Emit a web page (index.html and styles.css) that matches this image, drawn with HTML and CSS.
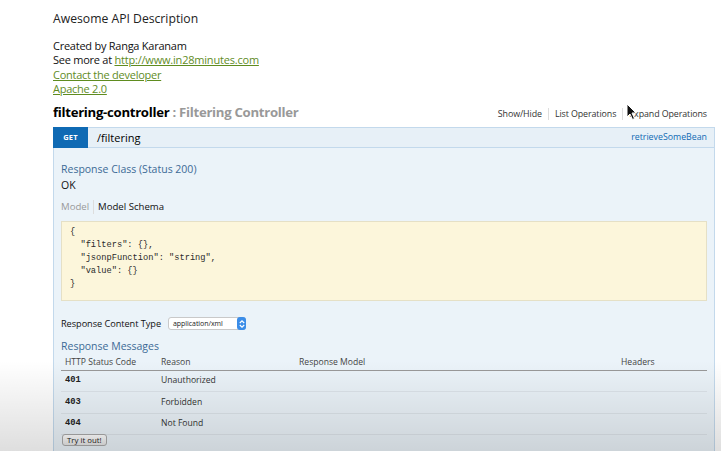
FILE: index.html
```html
<!DOCTYPE html>
<html>
<head>
<meta charset="utf-8">
<link rel="stylesheet" href="styles.css">
</head>
<body>
<div class="page">
  <div class="info">
    <div class="desc">Awesome API Description</div>
    <div class="meta">
      <div>Created by Ranga Karanam</div>
      <div>See more at <a class="url" href="#">http://www.in28minutes.com</a></div>
      <div><a href="#">Contact the developer</a></div>
      <div><a href="#">Apache 2.0</a></div>
    </div>
  </div>

  <div class="resource-head">
    <h2 class="res-title"><span class="res-name">filtering-controller</span> <span class="res-desc">: Filtering Controller</span></h2>
    <ul class="res-links">
      <li>Show/Hide</li>
      <li>List Operations</li>
      <li>Expand Operations</li>
    </ul>
  </div>

  <div class="op">
    <div class="op-head">
      <span class="method">GET</span>
      <span class="path">/filtering</span>
      <span class="nick">retrieveSomeBean</span>
    </div>
    <div class="op-body">
      <h4 class="sub">Response Class (Status 200)</h4>
      <div class="ok">OK</div>
      <div class="tabs">
        <span class="tab inactive">Model</span>
        <span class="tab active">Model Schema</span>
      </div>
      <pre class="code">{
  "filters": {},
  "jsonpFunction": "string",
  "value": {}
}</pre>
      <div class="ctype">
        <span>Response Content Type</span>
        <span class="select">application/xml<span class="arrows"><svg width="8" height="10" viewBox="0 0 8 10"><path d="M1.8 4 L4 1.8 L6.2 4 M1.8 6 L4 8.2 L6.2 6" fill="none" stroke="#fff" stroke-width="1.2"/></svg></span></span>
      </div>
      <h4 class="sub msgs">Response Messages</h4>
      <table class="msgtable">
        <thead>
          <tr><th class="c1">HTTP Status Code</th><th class="c2">Reason</th><th class="c3">Response Model</th><th class="c4">Headers</th></tr>
        </thead>
        <tbody>
          <tr><td class="code-cell">401</td><td>Unauthorized</td><td></td><td></td></tr>
          <tr><td class="code-cell">403</td><td>Forbidden</td><td></td><td></td></tr>
          <tr><td class="code-cell">404</td><td>Not Found</td><td></td><td></td></tr>
        </tbody>
      </table>
      <button class="try">Try it out!</button>
    </div>
  </div>
</div>
<svg class="cursor" width="12" height="18" viewBox="0 0 12 18"><path d="M1 1 L1 14 L4 11 L6.5 16.5 L8.5 15.5 L6 10 L10 10 Z" fill="#111" stroke="#fff" stroke-width="1"/></svg>
<div class="vignette"></div>
</body>
</html>
```

FILE: styles.css
```css
html, body {
  margin: 0;
  padding: 0;
  background: #fff;
}
body {
  font-family: "Open Sans", "DejaVu Sans", sans-serif;
  color: #222;
  width: 721px;
  height: 451px;
  overflow: hidden;
  position: relative;
}
.page {
  padding: 11px 6px 0 53px;
}
.desc {
  font-size: 12.2px;
  line-height: 16px;
  color: #222;
}
.meta {
  margin-top: 12px;
  font-size: 11px;
  line-height: 14.4px;
  letter-spacing: -0.25px;
  color: #111;
}
.meta a {
  color: #5f8c1f;
  text-decoration: underline;
}
.meta a.url {
  letter-spacing: -0.2px;
}
.resource-head {
  display: flex;
  align-items: center;
  justify-content: space-between;
  margin-top: 5px;
  height: 20px;
}
.res-title {
  margin: 0;
  font-size: 13.2px;
  line-height: 20px;
  font-weight: 700;
  letter-spacing: -0.3px;
}
.res-name { color: #000; }
.res-desc { color: #999; }
.res-links {
  list-style: none;
  margin: 4px 8px 0 0;
  padding: 0;
  display: flex;
  font-size: 8.9px;
  letter-spacing: -0.1px;
  line-height: 12px;
  color: #333;
}
.res-links li {
  padding: 0 6px;
  border-left: 1px solid #ddd;
}
.res-links li:first-child { border-left: none; padding-left: 0; }
.res-links li:last-child { padding-right: 0; }

.op {
  margin-top: 5px;
}
.op-head {
  display: flex;
  align-items: center;
  height: 19px;
  background: #e7f0f7;
  border: 1px solid #c3d9ec;
  border-left: none;
}
.method {
  background: #0f6ab4;
  color: #fff;
  font-size: 7.5px;
  font-weight: 700;
  width: 35px;
  height: 21px;
  line-height: 21px;
  margin-top: -1px;
  margin-bottom: -1px;
  text-align: center;
  letter-spacing: 0.2px;
}
.path {
  margin-left: 9px;
  font-size: 11px;
  color: #000;
  flex: 1;
}
.nick {
  font-size: 8.8px;
  color: #0f6ab4;
  margin-right: 7px;
}
.op-body {
  background: #ebf3f9;
  border: 1px solid #c3d9ec;
  border-top: none;
  padding: 13px 7px 0 7px;
  height: 306px;
  box-sizing: border-box;
}
.sub {
  margin: 0;
  font-size: 10.5px;
  font-weight: 400;
  color: #3c6a96;
  line-height: 16px;
}
.ok {
  font-size: 10.5px;
  line-height: 16px;
  color: #111;
}
.tabs {
  margin-top: 7px;
  display: flex;
  font-size: 9.6px;
  line-height: 14px;
}
.tab.inactive {
  color: #999;
  padding-right: 4px;
  border-right: 1px solid #ddd;
}
.tab.active {
  color: #111;
  padding-left: 4px;
}
.code {
  margin: 7px 0 0 0;
  background: #fcf6db;
  border: 1px solid #e5e0c6;
  padding: 4px 8px 8px 8px;
  font-family: "Liberation Mono", "DejaVu Sans Mono", monospace;
  font-size: 8.7px;
  line-height: 13.2px;
  color: #2a2a2a;
}
.ctype {
  margin-top: 16px;
  display: flex;
  align-items: center;
  font-size: 9.2px;
  letter-spacing: -0.05px;
  line-height: 14px;
  color: #111;
}
.select {
  margin-left: 7px;
  display: inline-flex;
  align-items: center;
  height: 13px;
  width: 78px;
  border: 1px solid #c9c9c9;
  border-radius: 3px;
  background: #fff;
  font-size: 7px;
  padding-left: 4px;
  box-sizing: border-box;
  position: relative;
  color: #222;
}
.arrows {
  position: absolute;
  right: -1px;
  top: -1px;
  width: 9px;
  height: 13px;
  background: #3b8de8;
  border-radius: 3px;
  display: flex;
  align-items: center;
  justify-content: center;
}
.msgs {
  margin-top: 7px;
}
.msgtable {
  width: 100%;
  border-collapse: collapse;
  margin-top: 0;
  font-size: 8.6px;
}
.msgtable th {
  font-weight: 400;
  text-align: left;
  color: #444;
  padding: 2px 4px 1px 4px;
  border-bottom: 1px solid #999;
  line-height: 13px;
}
.msgtable td {
  padding: 3.5px 4px 4.5px 4px;
  line-height: 12.5px;
  border-bottom: 1px solid #dde4ea;
  color: #333;
}
.msgtable td.code-cell {
  font-family: "Liberation Mono", "DejaVu Sans Mono", monospace;
  font-weight: 700;
  font-size: 8.8px;
  color: #222;
}
.c1 { width: 88px; }
.c2 { width: 130px; }
.c4 { width: 82px; }
.try {
  display: block;
  font-family: "Open Sans", sans-serif;
  font-size: 7.8px;
  padding: 0 4px;
  height: 12px;
  line-height: 10px;
  border: 1px solid #aaa;
  border-radius: 3px;
  background: linear-gradient(#fff, #e6e6e6);
  color: #222;
  margin: -1px 0 0 1px;
}
.cursor {
  position: absolute;
  left: 626px;
  top: 103px;
}
.vignette {
  position: absolute;
  left: 0;
  right: 0;
  bottom: 0;
  height: 90px;
  background: linear-gradient(rgba(0,0,0,0), rgba(0,0,0,0.13));
  pointer-events: none;
}
```
